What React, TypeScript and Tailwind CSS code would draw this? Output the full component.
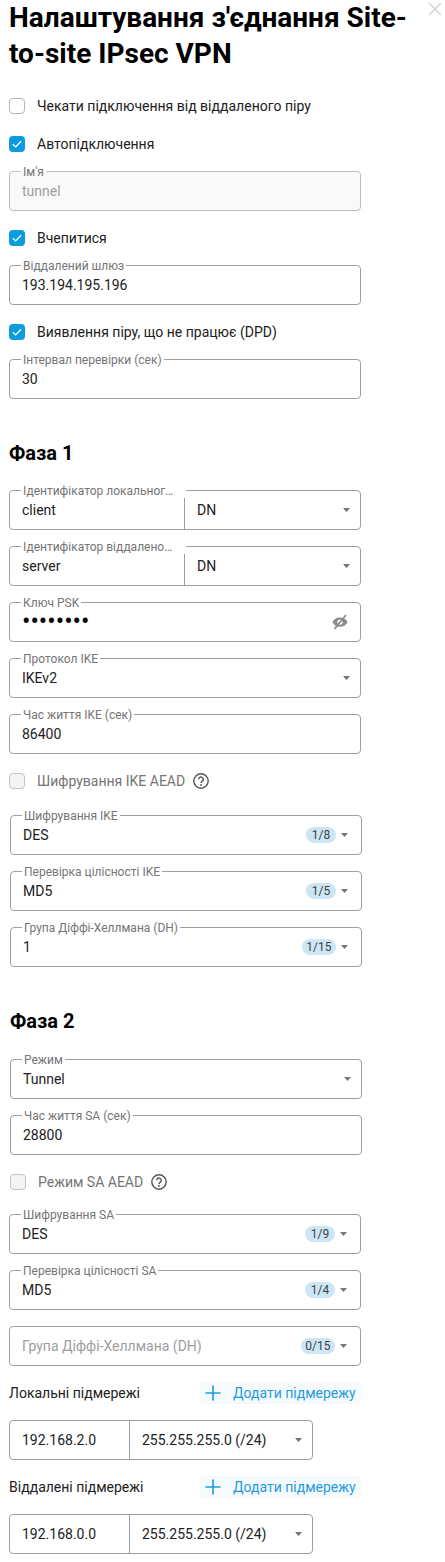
import React from "react";

const Chevron = () => (
  <svg width="7" height="4" viewBox="0 0 7 4" className="shrink-0">
    <path d="M0 0h7L3.5 4z" fill="#757575" />
  </svg>
);

const Check = () => (
  <svg width="16" height="16" viewBox="0 0 16 16">
    <path d="M3.8 8.2l2.9 2.7 5.4-5.6" fill="none" stroke="#fff" strokeWidth="1.3" />
  </svg>
);

function Checkbox({ checked, disabled, label, help, indent }: { checked?: boolean; disabled?: boolean; label: string; help?: boolean; indent?: boolean }) {
  return (
    <div className={`flex items-center h-5 ${indent ? "ml-px" : ""}`}>
      <span className={`w-4 h-4 rounded-[4px] flex items-center justify-center ${checked ? "bg-[#0d9be0]" : disabled ? "bg-[#f4f4f4] border border-[#c4c4c4]" : "bg-white border border-[#b5b5b5]"}`}>
        {checked && <Check />}
      </span>
      <span className={`ml-[12px] text-sm ${disabled ? "text-[#757575]" : "text-[#212121]"}`}>{label}</span>
      {help && (
        <svg width="16" height="16" viewBox="0 0 16 16" className="ml-[8px]">
          <circle cx="8" cy="8" r="7.2" fill="none" stroke="#555" strokeWidth="1.4" />
          <path d="M5.7 6.3a2.3 2.3 0 1 1 3.6 1.9c-.9.6-1.3 1-1.3 1.9" fill="none" stroke="#555" strokeWidth="1.4" />
          <circle cx="8" cy="12" r=".9" fill="#555" />
        </svg>
      )}
    </div>
  );
}

function Label({ text, disabled }: { text: string; disabled?: boolean }) {
  return (
    <span
      className={`absolute -top-[7px] left-[11px] px-[2px] text-xs leading-[14px] text-[#757575] whitespace-nowrap ${disabled ? "bg-[linear-gradient(#fff_50%,#f9f9f9_50%)]" : "bg-white"}`}
    >
      {text}
    </span>
  );
}

function Field({ label, value, disabled, select, count, placeholder, eye, shift }: { label?: string; value?: string; disabled?: boolean; select?: boolean; count?: string; placeholder?: string; eye?: boolean; shift?: boolean }) {
  return (
    <div className={`relative w-[352px] h-10 rounded border flex items-center pl-[12px] ${shift ? "ml-px" : ""} ${count ? "pr-[13px]" : select ? "pr-[10px]" : "pr-[11px]"} ${disabled ? "bg-[#f9f9f9] border-[#bdbdbd]" : "bg-white border-[#9e9e9e]"}`}>
      {label && <Label text={label} disabled={disabled} />}
      <span className={`flex-1 ${eye ? "text-[25px] leading-5 text-black" : "text-sm"} ${eye ? "" : disabled || placeholder ? "text-[#9e9e9e]" : "text-[#212121]"}`}>{value ?? placeholder}</span>
      {count && <span className="mr-[5px] h-4 min-w-[30px] rounded-full bg-[#cce6f6] px-[4.5px] text-center text-xs leading-4 text-[#424242]">{count}</span>}
      {select && <Chevron />}
      {eye && (
        <svg width="16" height="16" viewBox="0 0 16 16" className="mr-[1px]">
          <path d="M8 3.5C4.4 3.5 1.6 5.6 .5 8.2c1.1 2.6 3.9 4.5 7.5 4.5s6.4-1.9 7.5-4.5C14.4 5.6 11.6 3.5 8 3.5zm0 7.3a2.7 2.7 0 1 1 0-5.4 2.7 2.7 0 0 1 0 5.4z" fill="#8a8a8a" />
          <path d="M2.5 15L14 1" stroke="#8a8a8a" strokeWidth="1.8" />
        </svg>
      )}
    </div>
  );
}

function Split({ label, value, right, width, leftW }: { label?: string; value: string; right: string; width: string; leftW: string }) {
  return (
    <div className={`relative ${width} h-10 rounded border border-[#9e9e9e] bg-white flex text-sm text-[#212121]`}>
      {label && (
        <span className="absolute -top-[7px] left-[11px] w-[165px] bg-white pl-[2px] text-xs leading-[14px] text-[#757575] whitespace-nowrap">
          {label}
        </span>
      )}
      <div className={`${leftW} shrink-0 border-r border-[#9e9e9e] pl-[12px] flex items-center`}>{value}</div>
      <div className="flex-1 pl-[12px] pr-[10px] flex items-center justify-between">
        <span>{right}</span>
        <Chevron />
      </div>
    </div>
  );
}

function SubnetHead({ label }: { label: string }) {
  return (
    <div className="w-[352px] h-[22px] flex items-center justify-between text-sm text-[#212121]">
      <span>{label}</span>
      <button className="w-[161px] h-[22px] rounded bg-[#f5fafd] flex items-center pl-[5px] text-sm text-[#1f9ae0]">
        <svg width="16" height="16" viewBox="0 0 16 16" className="shrink-0">
          <path d="M8 .5v15M.5 8h15" stroke="#1f9ae0" strokeWidth="1.6" />
        </svg>
        <span className="ml-[12px] whitespace-nowrap">Додати підмережу</span>
      </button>
    </div>
  );
}

export default function App() {
  return (
    <div className="relative w-[445px] h-[1562px] overflow-hidden bg-white pl-[9px] font-['Roboto',sans-serif]">
      <svg width="14" height="14" viewBox="0 0 14 14" className="absolute top-[2px] left-[428px]">
        <path d="M1 1l12 12M13 1L1 13" stroke="#d0d0d0" strokeWidth="1.2" />
      </svg>
      <h1 className="w-[400px] pt-0 text-[28px] leading-9 font-bold text-black">Налаштування з'єднання Site-to-site IPsec VPN</h1>
      <div className="mt-[24px]"><Checkbox label="Чекати підключення від віддаленого піру" /></div>
      <div className="mt-[18px]"><Checkbox checked label="Автопідключення" /></div>
      <div className="mt-[17px]"><Field label="Ім'я" value="tunnel" disabled /></div>
      <div className="mt-[17px]"><Checkbox checked label="Вчепитися" /></div>
      <div className="mt-[17px]"><Field label="Віддалений шлюз" value="193.194.195.196" /></div>
      <div className="mt-[17px]"><Checkbox checked label="Виявлення піру, що не працює (DPD)" /></div>
      <div className="mt-[17px]"><Field label="Інтервал перевірки (сек)" value="30" /></div>

      <h2 className="mt-[39px] text-xl leading-[30px] font-bold text-black">Фаза 1</h2>
      <div className="mt-[22px] flex flex-col gap-4">
        <Split label="Ідентифікатор локальног…" value="client" right="DN" width="w-[352px]" leftW="w-[175px]" />
        <Split label="Ідентифікатор віддалено…" value="server" right="DN" width="w-[352px]" leftW="w-[175px]" />
        <Field label="Ключ PSK" value="••••••••" eye />
        <Field label="Протокол IKE" value="IKEv2" select />
        <Field label="Час життя IKE (сек)" value="86400" />
      </div>
      <div className="mt-[17px]"><Checkbox disabled help label="Шифрування IKE AEAD" /></div>
      <div className="mt-[24px] flex flex-col gap-4">
        <Field shift label="Шифрування IKE" value="DES" select count="1/8" />
        <Field shift label="Перевірка цілісності IKE" value="MD5" select count="1/5" />
        <Field shift label="Група Діффі-Хеллмана (DH)" value="1" select count="1/15" />
      </div>

      <h2 className="mt-[39px] ml-px text-xl leading-[30px] font-bold text-black">Фаза 2</h2>
      <div className="mt-[23px] flex flex-col gap-4">
        <Field shift label="Режим" value="Tunnel" select />
        <Field shift label="Час життя SA (сек)" value="28800" />
      </div>
      <div className="mt-[17px]"><Checkbox indent disabled help label="Режим SA AEAD" /></div>
      <div className="mt-[22px] flex flex-col gap-4">
        <Field label="Шифрування SA" value="DES" select count="1/9" />
        <Field label="Перевірка цілісності SA" value="MD5" select count="1/4" />
        <Field placeholder="Група Діффі-Хеллмана (DH)" select count="0/15" />
      </div>
      <div className="mt-[16px]"><SubnetHead label="Локальні підмережі" /></div>
      <div className="mt-[16px]"><Split value="192.168.2.0" right="255.255.255.0 (/24)" width="w-[304px]" leftW="w-[120px]" /></div>
      <div className="mt-[16px]"><SubnetHead label="Віддалені підмережі" /></div>
      <div className="mt-[16px]"><Split value="192.168.0.0" right="255.255.255.0 (/24)" width="w-[304px]" leftW="w-[120px]" /></div>
    </div>
  );
}
